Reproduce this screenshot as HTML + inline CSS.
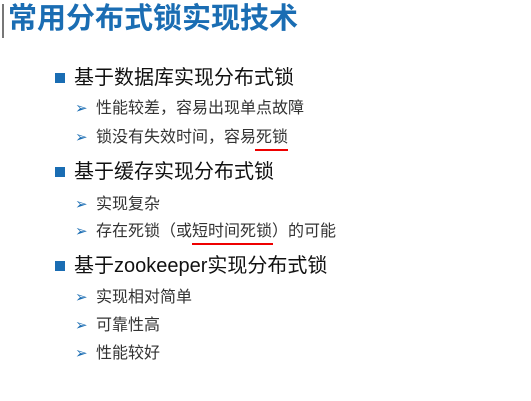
<html><head><style>
body{margin:0;width:531px;height:401px;background:#fff;position:relative;overflow:hidden;font-family:"Liberation Sans","Noto Sans CJK SC",sans-serif}
.bar{position:absolute;left:2px;top:4px;width:2px;height:34px;background:#777}
.t{position:absolute;left:8px;top:2px;font-size:29px;font-weight:bold;color:#1a6db3;line-height:34px;white-space:nowrap}
.l1{position:absolute;left:74px;font-size:20px;color:#111;line-height:24px;white-space:nowrap}
.l1:before{content:"";position:absolute;left:-19px;top:7px;width:10px;height:10px;background:#1a6db3}
.l2{position:absolute;left:96px;font-size:16px;color:#333;line-height:18px;white-space:nowrap}
.l2:before{content:"➢";position:absolute;left:-21px;top:0;font-size:15px;color:#1a6db3}
.u{position:absolute;height:2px;background:#e00}
</style></head><body>
<div class="bar"></div>
<div class="t">常用分布式锁实现技术</div>
<div class="l1" style="top:66px">基于数据库实现分布式锁</div>
<div class="l2" style="top:100px">性能较差，容易出现单点故障</div>
<div class="l2" style="top:129px">锁没有失效时间，容易死锁</div>
<div class="u" style="left:255px;top:149px;width:33px"></div>
<div class="l1" style="top:160px">基于缓存实现分布式锁</div>
<div class="l2" style="top:196px">实现复杂</div>
<div class="l2" style="top:223px">存在死锁（或短时间死锁）的可能</div>
<div class="u" style="left:192px;top:243px;width:81px"></div>
<div class="l1" style="top:254px">基于zookeeper实现分布式锁</div>
<div class="l2" style="top:289px">实现相对简单</div>
<div class="l2" style="top:317px">可靠性高</div>
<div class="l2" style="top:345px">性能较好</div>
</body></html>
